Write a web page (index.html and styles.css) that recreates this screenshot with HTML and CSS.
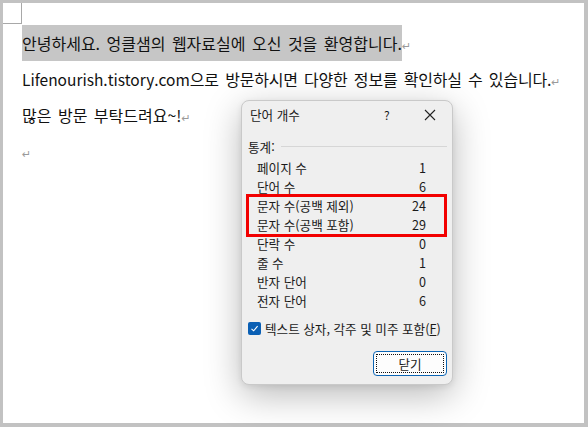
FILE: index.html
```html
<!DOCTYPE html>
<html lang="ko">
<head>
<meta charset="utf-8">
<link rel="stylesheet" href="styles.css">
</head>
<body>
<div class="page">
  <div class="corner"></div>
  <div class="doc">
    <div class="para"><span class="sel">안녕하세요. 엉클샘의 웹자료실에 오신 것을 환영합니다.</span><span class="mark">↵</span></div>
    <div class="para tight"><span class="latin">Lifenourish.tistory.com</span>으로 방문하시면 다양한 정보를 확인하실 수 있습니다.<span class="mark">↵</span></div>
    <div class="para">많은 방문 부탁드려요~!<span class="mark">↵</span></div>
    <div class="para"><span class="mark">↵</span></div>
  </div>

  <div class="dialog">
    <div class="titlebar">
      <span class="title">단어 개수</span>
      <span class="help">?</span>
      <svg class="close" width="12" height="12" viewBox="0 0 12 12"><path d="M1 1 L11 11 M11 1 L1 11" stroke="#222" stroke-width="1.1" fill="none"/></svg>
    </div>
    <div class="group">
      <span>통계:</span>
      <div class="rule"></div>
    </div>
    <div class="stats">
      <div class="row"><span>페이지 수</span><span>1</span></div>
      <div class="row"><span>단어 수</span><span>6</span></div>
      <div class="row"><span>문자 수(공백 제외)</span><span>24</span></div>
      <div class="row"><span>문자 수(공백 포함)</span><span>29</span></div>
      <div class="row"><span>단락 수</span><span>0</span></div>
      <div class="row"><span>줄 수</span><span>1</span></div>
      <div class="row"><span>반자 단어</span><span>0</span></div>
      <div class="row"><span>전자 단어</span><span>6</span></div>
    </div>
    <div class="check">
      <span class="box"><svg width="9" height="9" viewBox="0 0 9 9"><path d="M1.5 4.8 L3.6 6.8 L7.6 2.2" stroke="#fff" stroke-width="1.1" fill="none"/></svg></span>
      <span>텍스트 상자, 각주 및 미주 포함(<u>F</u>)</span>
    </div>
    <div class="actions">
      <div class="btn"><span class="focus">닫기</span></div>
    </div>
    <div class="highlight"></div>
  </div>
</div>
</body>
</html>
```

FILE: styles.css
```css
html, body {
  margin: 0;
  padding: 0;
}
body {
  width: 588px;
  height: 427px;
  overflow: hidden;
  font-family: "Noto Sans CJK KR", "Noto Sans", sans-serif;
}
.page {
  position: relative;
  box-sizing: border-box;
  width: 588px;
  height: 427px;
  background: #fff;
  border-style: solid;
  border-color: #c2c2c2;
  border-width: 3px 4px 4px 3px;
}
.corner {
  position: absolute;
  left: 0;
  top: 0;
  width: 18px;
  height: 20px;
  border-right: 1px solid #a8a8a8;
  border-bottom: 1px solid #a8a8a8;
}
.doc {
  padding: 22px 0 0 19px;
  font-size: 16px;
  word-spacing: 2px;
  color: #111;
}
.para {
  height: 36px;
  line-height: 36px;
  white-space: nowrap;
}
.tight {
  letter-spacing: -0.2px;
}
.latin {
  font-size: 15.5px;
  letter-spacing: 0;
}
.sel {
  background: #c6c6c6;
  display: inline-block;
  height: 36px;
}
.mark {
  color: #9a9a9a;
  font-size: 11px;
  font-family: "DejaVu Sans", sans-serif;
}
.dialog {
  position: absolute;
  left: 238px;
  top: 97px;
  width: 212px;
  height: 285px;
  box-sizing: border-box;
  background: #efefef;
  border: 1px solid #c9c9c9;
  border-radius: 8px;
  box-shadow: 0 10px 36px rgba(0,0,0,0.28), 0 2px 6px rgba(0,0,0,0.08);
  font-size: 12.6px;
  color: #1a1a1a;
  display: flex;
  flex-direction: column;
}
.titlebar {
  height: 27px;
  display: flex;
  align-items: center;
  padding-left: 8px;
}
.title {
  flex: 1;
}
.help {
  width: 12px;
  margin-right: 28px;
  font-size: 12px;
}
.close {
  margin-right: 16px;
}
.group {
  margin-top: 9px;
  height: 19px;
  display: flex;
  align-items: center;
  padding-left: 6px;
  padding-right: 5px;
}
.rule {
  flex: 1;
  height: 1px;
  background: #d6d6d6;
  margin-left: 6px;
}
.stats {
  margin-top: 2px;
  padding-left: 15px;
  padding-right: 26px;
}
.row {
  height: 19px;
  display: flex;
  justify-content: space-between;
  align-items: center;
}
.check {
  margin-top: 9px;
  height: 19px;
  display: flex;
  align-items: center;
  padding-left: 6px;
  gap: 4px;
  white-space: nowrap;
}
.box {
  width: 13px;
  height: 13px;
  border-radius: 2px;
  background: #0a5fb4;
  display: flex;
  align-items: center;
  justify-content: center;
}
.box svg {
  display: block;
}
.actions {
  margin-top: 13px;
  display: flex;
  justify-content: flex-end;
  padding-right: 5px;
}
.btn {
  width: 74px;
  height: 25px;
  box-sizing: border-box;
  border: 1px solid #0a64b4;
  border-radius: 4px;
  background: #fdfdfd;
  padding: 2px;
  display: flex;
}
.focus {
  flex: 1;
  border: 1px dotted #111;
  display: flex;
  align-items: center;
  justify-content: center;
  font-size: 12.6px;
}
.highlight {
  position: absolute;
  left: 4px;
  top: 93px;
  width: 201px;
  height: 43px;
  box-sizing: border-box;
  border: 3px solid #f20000;
}
```
